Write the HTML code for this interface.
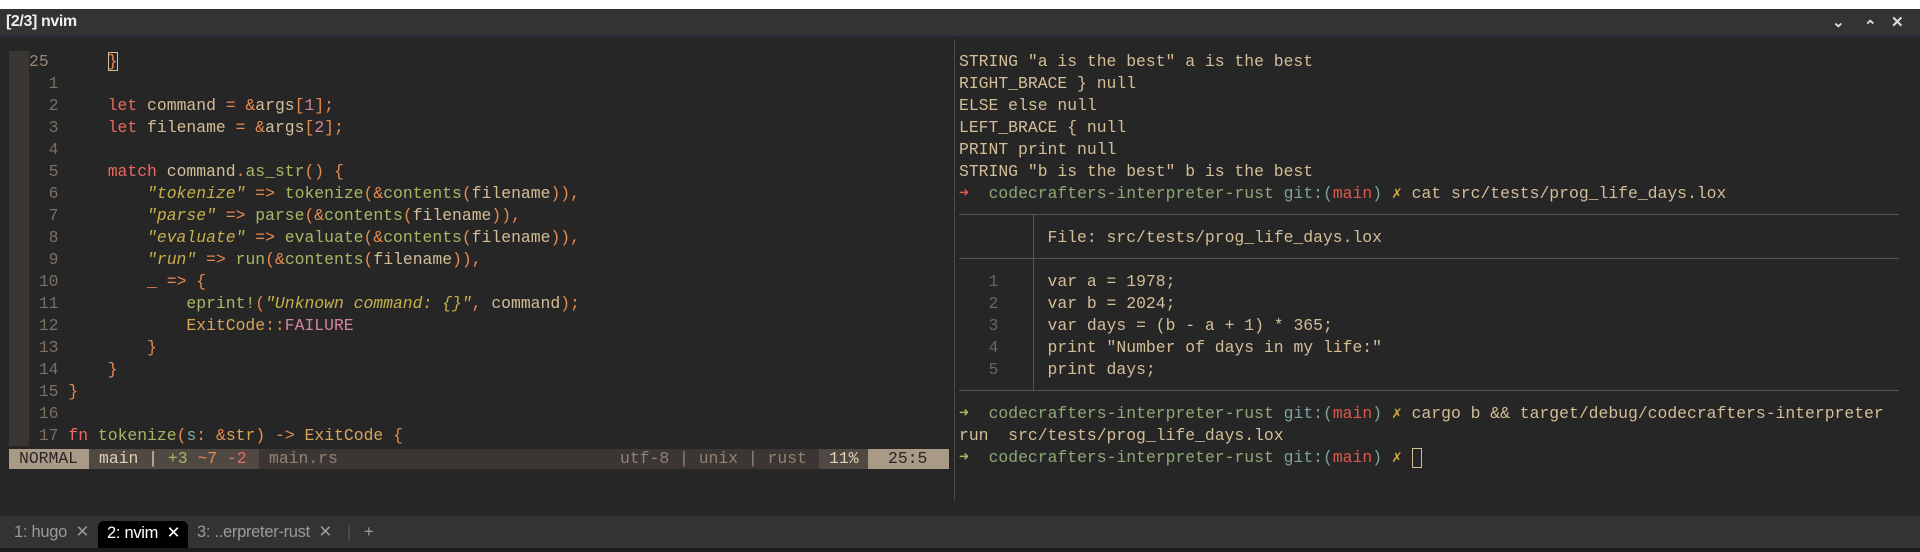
<!DOCTYPE html>
<html><head><meta charset="utf-8"><style>
*{margin:0;padding:0;box-sizing:border-box}
html,body{width:1920px;height:552px;overflow:hidden;background:#262626}
body{position:relative;font-family:"Liberation Mono",monospace;font-size:16.4px;color:#d4be98}
.top{position:absolute;left:0;top:0;width:1920px;height:9px;background:#fff}
.title{position:absolute;left:0;top:9px;width:1920px;height:28px;background:#333;border-bottom:2px solid #2c2a3c}
.title .t{position:absolute;left:6px;top:4px;font:bold 16px "Liberation Sans",sans-serif;color:#eee;letter-spacing:-0.4px}
.title .ic{position:absolute;top:4px;font:bold 15px "Liberation Sans",sans-serif;color:#ddd}
.row{position:absolute;left:0;height:22px;line-height:22px;white-space:pre}
.gut{position:absolute;left:9px;top:51px;width:20px;height:395px;background:#3a3632}
.ln{color:#7c6f64}
.k{color:#ea6962}.o{color:#e78a4e}.p{color:#d3869b}.g{color:#a9b665}.y{color:#d8a657}.b{color:#7daea3}
.s{color:#c7b04a;font-style:italic}
.status{position:absolute;top:449px;height:20px;line-height:20px;white-space:pre;font-size:16.4px}
.sep{position:absolute;left:954px;top:39px;width:1px;height:462px;background:#4a4a4a}
.tabs{position:absolute;left:0;top:516px;width:1920px;height:32px;background:#333;font:16.5px "Liberation Sans",sans-serif;color:#9a9a9a;letter-spacing:-0.3px}
.tab{position:absolute;top:0;height:32px;line-height:32px;white-space:pre}
.bot{position:absolute;left:0;top:548px;width:1920px;height:4px;background:#1c1c1c}
.hl{position:absolute;height:1px;background:#555}
.dim{color:#666}
.pg{color:#8fa876}.pt{color:#7fa2a0}.pr{color:#e0574a}.px{color:#d7a53b}
</style></head><body>
<div class="top"></div>
<div class="title"><span class="t">[2/3] nvim</span>
<span class="ic" style="left:1832px">&#8964;</span><span class="ic" style="left:1864px;top:8px">&#8963;</span><span class="ic" style="left:1891px">&#10005;</span></div>

<div class="gut"></div>
<div style="position:absolute;left:0;top:0;width:954px;height:516px;overflow:hidden">
<div class="row" style="top:51px;left:29px"><span class="ln" style="color:#928374">25</span>      <span class="o" style="outline:1px solid #d4be98;outline-offset:-1px">}</span></div>
<div class="row" style="top:73px;left:29px"><span class="ln">  1</span></div>
<div class="row" style="top:95px;left:29px"><span class="ln">  2</span>     <span class="k">let</span> command <span class="o">=</span> <span class="o">&amp;</span>args<span class="o">[</span><span class="p">1</span><span class="o">];</span></div>
<div class="row" style="top:117px;left:29px"><span class="ln">  3</span>     <span class="k">let</span> filename <span class="o">=</span> <span class="o">&amp;</span>args<span class="o">[</span><span class="p">2</span><span class="o">];</span></div>
<div class="row" style="top:139px;left:29px"><span class="ln">  4</span></div>
<div class="row" style="top:161px;left:29px"><span class="ln">  5</span>     <span class="k">match</span> command<span class="o">.</span><span class="g">as_str</span><span class="o">()</span> <span class="o">{</span></div>
<div class="row" style="top:183px;left:29px"><span class="ln">  6</span>         <span class="s">"tokenize"</span> <span class="o">=&gt;</span> <span class="g">tokenize</span><span class="o">(&amp;</span><span class="g">contents</span><span class="o">(</span>filename<span class="o">)),</span></div>
<div class="row" style="top:205px;left:29px"><span class="ln">  7</span>         <span class="s">"parse"</span> <span class="o">=&gt;</span> <span class="g">parse</span><span class="o">(&amp;</span><span class="g">contents</span><span class="o">(</span>filename<span class="o">)),</span></div>
<div class="row" style="top:227px;left:29px"><span class="ln">  8</span>         <span class="s">"evaluate"</span> <span class="o">=&gt;</span> <span class="g">evaluate</span><span class="o">(&amp;</span><span class="g">contents</span><span class="o">(</span>filename<span class="o">)),</span></div>
<div class="row" style="top:249px;left:29px"><span class="ln">  9</span>         <span class="s">"run"</span> <span class="o">=&gt;</span> <span class="g">run</span><span class="o">(&amp;</span><span class="g">contents</span><span class="o">(</span>filename<span class="o">)),</span></div>
<div class="row" style="top:271px;left:29px"><span class="ln"> 10</span>         <span class="o">_</span> <span class="o">=&gt;</span> <span class="o">{</span></div>
<div class="row" style="top:293px;left:29px"><span class="ln"> 11</span>             <span class="g">eprint!</span><span class="o">(</span><span class="s">"Unknown command: {}"</span><span class="o">,</span> command<span class="o">);</span></div>
<div class="row" style="top:315px;left:29px"><span class="ln"> 12</span>             <span class="y">ExitCode</span><span class="o">::</span><span class="p">FAILURE</span></div>
<div class="row" style="top:337px;left:29px"><span class="ln"> 13</span>         <span class="o">}</span></div>
<div class="row" style="top:359px;left:29px"><span class="ln"> 14</span>     <span class="o">}</span></div>
<div class="row" style="top:381px;left:29px"><span class="ln"> 15</span> <span class="o">}</span></div>
<div class="row" style="top:403px;left:29px"><span class="ln"> 16</span></div>
<div class="row" style="top:425px;left:29px"><span class="ln"> 17</span> <span class="k">fn</span> <span class="g">tokenize</span><span class="o">(</span><span class="b">s</span><span class="o">:</span> <span class="o">&amp;</span><span class="y">str</span><span class="o">)</span> <span class="o">-&gt;</span> <span class="y">ExitCode</span> <span class="o">{</span></div>

<div class="status" style="left:9px;width:940px;background:#3b3633"></div>
<div class="status" style="left:9px;width:80px;background:#a89a86;color:#2a2624;padding-left:10px">NORMAL</div>
<div class="status" style="left:89px;width:170px;background:#504843;color:#e0d0b0;padding-left:10px">main | <span style="color:#a9b665">+3</span> <span style="color:#e78a4e">~7</span> <span style="color:#ea6962">-2</span></div>
<div class="status" style="left:269px;color:#928374">main.rs</div>
<div class="status" style="left:620px;color:#928374">utf-8 | unix | rust</div>
<div class="status" style="left:819px;width:49px;background:#504843;color:#e0d0b0;padding-left:10px">11%</div>
<div class="status" style="left:868px;width:81px;background:#a89a86;color:#2a2624;padding-left:20px">25:5</div>
</div>

<div class="sep"></div>

<div style="position:absolute;left:959px;top:0;width:961px;height:516px;overflow:hidden">
<div class="row" style="top:51px">STRING "a is the best" a is the best</div>
<div class="row" style="top:73px">RIGHT_BRACE } null</div>
<div class="row" style="top:95px">ELSE else null</div>
<div class="row" style="top:117px">LEFT_BRACE { null</div>
<div class="row" style="top:139px">PRINT print null</div>
<div class="row" style="top:161px">STRING "b is the best" b is the best</div>
<div class="row" style="top:183px"><span class="pr">&#10140;</span>  <span class="pg">codecrafters-interpreter-rust</span> <span class="pt">git:(</span><span class="pr">main</span><span class="pt">)</span> <span class="px">&#10007;</span> cat src/tests/prog_life_days.lox</div>
<div class="hl" style="left:0;top:214px;width:940px"></div>
<div class="hl" style="left:0;top:258px;width:940px"></div>
<div class="hl" style="left:0;top:390px;width:940px"></div>
<div style="position:absolute;left:74px;top:214px;width:1px;height:176px;background:#555"></div>
<div class="row" style="top:227px">         File: src/tests/prog_life_days.lox</div>
<div class="row" style="top:271px"><span class="dim">   1</span>     var a = 1978;</div>
<div class="row" style="top:293px"><span class="dim">   2</span>     var b = 2024;</div>
<div class="row" style="top:315px"><span class="dim">   3</span>     var days = (b - a + 1) * 365;</div>
<div class="row" style="top:337px"><span class="dim">   4</span>     print "Number of days in my life:"</div>
<div class="row" style="top:359px"><span class="dim">   5</span>     print days;</div>
<div class="row" style="top:403px"><span class="g">&#10140;</span>  <span class="pg">codecrafters-interpreter-rust</span> <span class="pt">git:(</span><span class="pr">main</span><span class="pt">)</span> <span class="px">&#10007;</span> cargo b &amp;&amp; target/debug/codecrafters-interpreter</div>
<div class="row" style="top:425px">run  src/tests/prog_life_days.lox</div>
<div class="row" style="top:447px"><span class="g">&#10140;</span>  <span class="pg">codecrafters-interpreter-rust</span> <span class="pt">git:(</span><span class="pr">main</span><span class="pt">)</span> <span class="px">&#10007;</span> <span style="display:inline-block;width:10px;height:20px;border:1.5px solid #d4be98;vertical-align:middle"></span></div>
</div>

<div class="tabs">
<span class="tab" style="left:14px">1: hugo  &#10005;</span>
<span class="tab" style="left:98px;top:5px;height:27px;line-height:24px;width:90px;background:#000;color:#fff;border-radius:6px 6px 0 0;padding-left:9px">2: nvim  &#10005;</span>
<span class="tab" style="left:197px">3: ..erpreter-rust  &#10005;</span>
<span class="tab" style="left:347px;color:#555">|</span>
<span class="tab" style="left:364px">+</span>
</div>
<div class="bot"></div>
</body></html>
